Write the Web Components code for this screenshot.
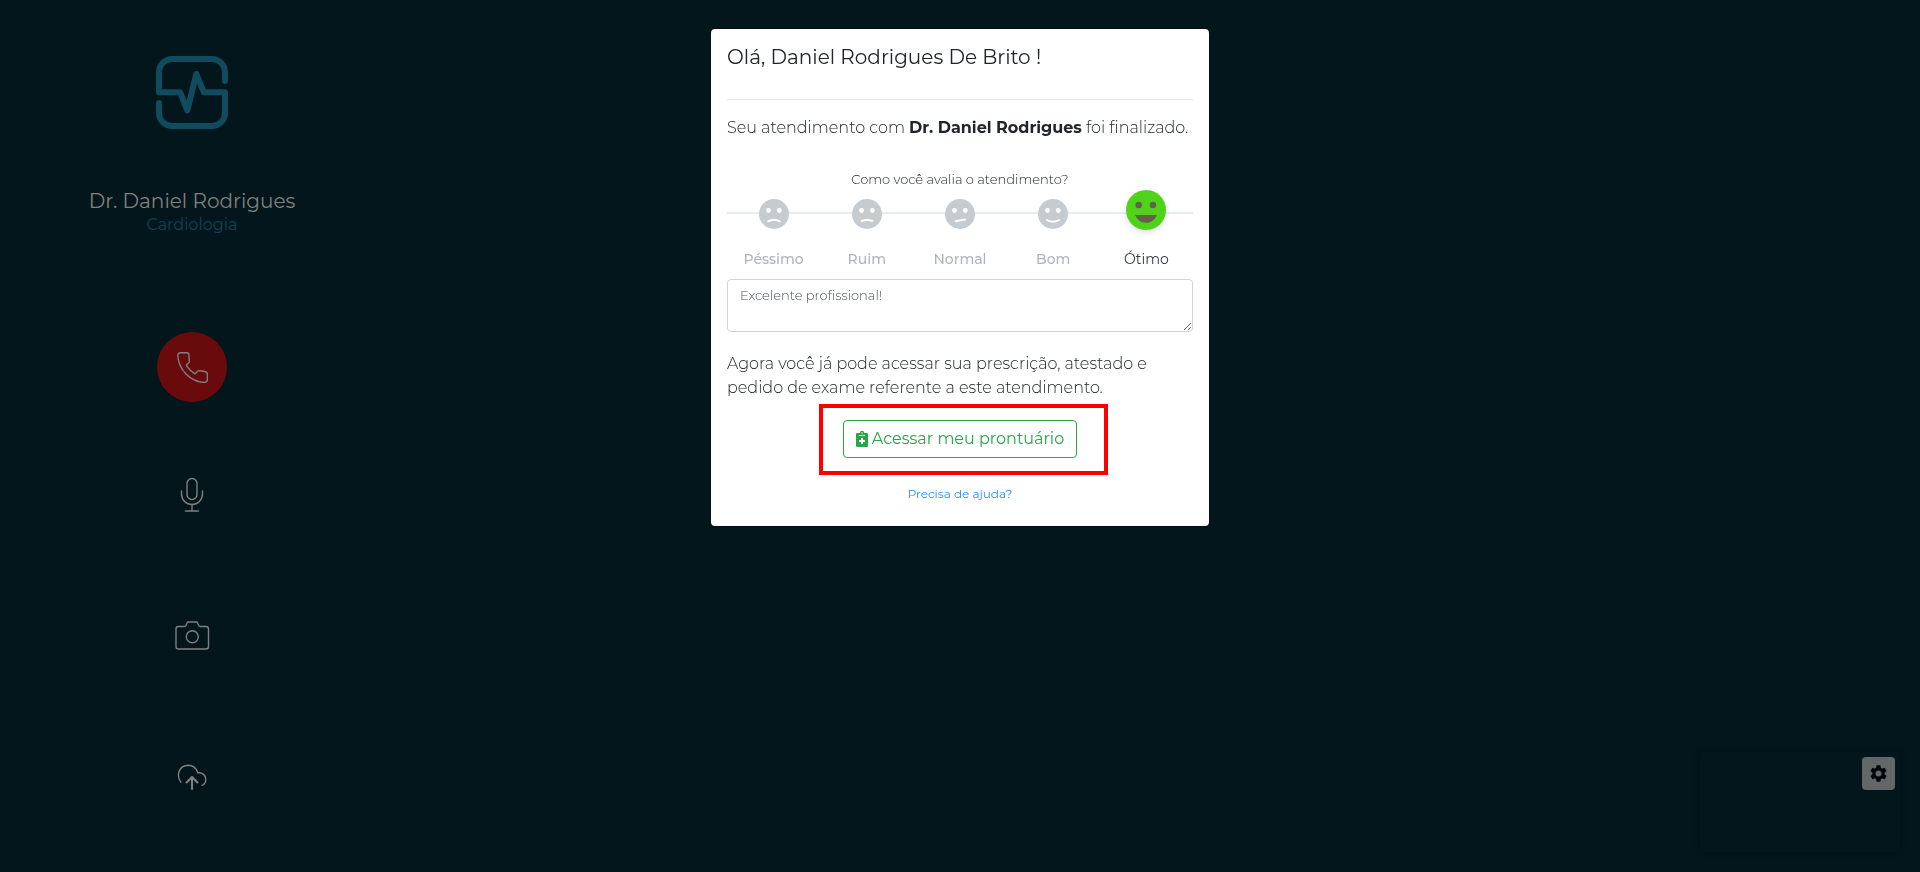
<!DOCTYPE html>
<html lang="pt-BR">
<head>
<meta charset="utf-8">
<meta name="viewport" content="width=device-width, initial-scale=1">
<title>Atendimento finalizado</title>
<style>
	body {
		min-height: 100vh;
		margin: 0;

		background: #02161c;
		color: #212529;

		font-family: Montserrat, Inter, sans-serif;
		font-size: 16px;
		font-weight: 300;
		line-height: 24px;
	}

	strong {
		font-weight: 700;
	}
</style>
</head>
<body>
<call-sidebar>
	<span slot="name">Dr. Daniel Rodrigues</span>
	<span slot="specialty">Cardiologia</span>
	<call-action label="Encerrar chamada" primary>
		<svg width="31" height="31" viewBox="0 0 31 31"><path d="M3.5.8H9.5Q12 .8 12 3V6Q12.8 9 12 10.5L9.8 12.5Q9.2 13.3 9.8 14.2Q13 19 18 21.8L20 20Q20.8 18.6 22 18.8L27 19.2Q30.4 20 30.4 22V27.5Q30 30.5 27 30.4Q17 30 9 22Q1.5 14 .8 4Q.6.8 3.5.8Z"/></svg>
	</call-action>
	<call-action label="Microfone">
		<svg width="24" height="36" viewBox="0 0 24 36"><rect x="7" y="1.5" width="10" height="21" rx="5"/><path d="M1.5 14V17A10.5 10.5 0 0 0 22.5 17V14M12 27.5V34M5.5 34H18.5"/></svg>
	</call-action>
	<call-action label="Câmera">
		<svg width="36" height="30" viewBox="0 0 36 30"><path d="M4.5 5.5H10.5Q11.5 5.5 12 4.5L13 2Q13.4 1 14.5 1H22Q23 1 23.5 2L24.8 4.5Q25.2 5.5 26.5 5.5H32Q34.5 5.5 34.5 8V25.5Q34.5 28 32 28H4.5Q2 28 2 25.5V8Q2 5.5 4.5 5.5Z"/><circle cx="18.3" cy="15.7" r="6"/></svg>
	</call-action>
	<call-action label="Enviar arquivo">
		<svg width="30" height="26" viewBox="0 0 30 26"><path d="M4 18.3C-1.5 11 2.5 1.5 11 1.3C15.8 1.3 19.4 4.2 20.8 8.8C25.5 8.2 28.8 11.4 28.8 15.2C28.8 18 27.4 20.4 25 21.3"/><path stroke-width="2" d="M15 25V13M9.6 18.5L15 13L20.4 18.5"/></svg>
	</call-action>
</call-sidebar>

<camera-preview></camera-preview>

<visit-dialog>
	<span slot="title">Olá, Daniel Rodrigues De Brito !</span>
	<span slot="summary">Seu atendimento com <strong>Dr. Daniel Rodrigues</strong> foi finalizado.</span>
	<rating-scale value="5">Como você avalia o atendimento?</rating-scale>
	<comment-box value="Excelente profissional!"></comment-box>
	<span slot="notice">Agora você já pode acessar sua prescrição, atestado e pedido de exame referente a este atendimento.</span>
	<record-button slot="action">Acessar meu prontuário</record-button>
	<span slot="help">Precisa de ajuda?</span>
</visit-dialog>

<script>
/** Left column: brand, doctor and the call controls. */
class CallSidebar extends HTMLElement {
	constructor() {
		super();

		this.attachShadow({ mode: "open" }).innerHTML = `
		<style>
		:host {
			display: flex;
			flex-direction: column;
			align-items: center;
			box-sizing: border-box;
			width: 20%;
			min-width: 240px;
			padding-top: 56px;

			text-align: center;
		}

		.logo {
			fill: none;
			stroke: #114b5e;
			stroke-width: 6;
			stroke-linecap: round;
			stroke-linejoin: round;
		}

		h1 {
			margin: 60px 0 0;

			color: #808080;
			font-size: 20px;
			font-weight: 400;
			line-height: 24px;
		}

		p {
			margin: 0;

			color: #0f4558;
			font-size: 16px;
			font-weight: 400;
			line-height: 24px;
		}

		nav {
			display: flex;
			flex-direction: column;
			gap: 71px;
			margin-top: 95px;
		}
		</style>
		<svg class="logo" width="72" height="73" viewBox="0 0 72 73" aria-hidden="true">
			<path d="M69 25V16A13 13 0 0 0 56 3H16A13 13 0 0 0 3 16V36.3H24.3L31.3 54.5L40.3 18L48 36.3H69V57A13 13 0 0 1 56 70H16A13 13 0 0 1 3 57V47"/>
		</svg>
		<h1><slot name="name"></slot></h1>
		<p><slot name="specialty"></slot></p>
		<nav><slot></slot></nav>`;
	}
}

/** Round icon button; the icon is slotted. */
class CallAction extends HTMLElement {
	constructor() {
		super();

		this.attachShadow({ mode: "open" }).innerHTML = `
		<style>
		:host {
			display: block;
		}

		:host([primary]) {
			margin-bottom: -13px;
		}

		button {
			display: flex;
			align-items: center;
			justify-content: center;
			width: 70px;
			height: 70px;
			padding: 0;

			background: none;
			border: 0;
			border-radius: 50%;

			cursor: pointer;
		}

		:host([primary]) button {
			background: #690b0c;
		}

		::slotted(svg) {
			fill: none;
			stroke: #808080;
			stroke-width: 1.4;
			stroke-linecap: round;
			stroke-linejoin: round;
		}
		</style>
		<button type="button"><slot></slot></button>`;
	}

	connectedCallback() {
		this.shadowRoot.querySelector("button").setAttribute("aria-label", this.getAttribute("label"));
	}
}

/** Own camera picture, floating in the corner. */
class CameraPreview extends HTMLElement {
	constructor() {
		super();

		this.attachShadow({ mode: "open" }).innerHTML = `
		<style>
		:host {
			position: fixed;
			right: 20px;
			bottom: 20px;
			display: flex;
			align-items: flex-start;
			justify-content: flex-end;
			box-sizing: border-box;
			width: 200px;
			height: 100px;
			padding: 5px;

			border-radius: 6px;
			box-shadow: 0 0 6px rgba(0, 0, 0, .2);
		}

		button {
			display: flex;
			align-items: center;
			justify-content: center;
			width: 33px;
			height: 33px;
			padding: 0;

			background: #636768;
			border: 0;
			border-radius: 4px;

			cursor: pointer;
		}
		</style>
		<button type="button" aria-label="Configurações">
			<svg width="17" height="17" viewBox="2 2 20 20" fill="#02080a"><path d="M19.14 12.94c.04-.3.06-.61.06-.94 0-.32-.02-.64-.07-.94l2.03-1.58c.18-.14.23-.41.12-.61l-1.92-3.32c-.12-.22-.37-.29-.59-.22l-2.39.96c-.5-.38-1.03-.7-1.62-.94l-.36-2.54c-.04-.24-.24-.41-.48-.41h-3.84c-.24 0-.43.17-.47.41l-.36 2.54c-.59.24-1.13.57-1.62.94l-2.39-.96c-.22-.08-.47 0-.59.22L2.74 8.87c-.12.21-.08.47.12.61l2.03 1.58c-.05.3-.09.63-.09.94s.02.64.07.94l-2.03 1.58c-.18.14-.23.41-.12.61l1.92 3.32c.12.22.37.29.59.22l2.39-.96c.5.38 1.03.7 1.62.94l.36 2.54c.05.24.24.41.48.41h3.84c.24 0 .44-.17.47-.41l.36-2.54c.59-.24 1.13-.56 1.62-.94l2.39.96c.22.08.47 0 .59-.22l1.92-3.32c.12-.22.07-.47-.12-.61l-2.01-1.58zM12 15.6c-1.98 0-3.6-1.62-3.6-3.6s1.62-3.6 3.6-3.6 3.6 1.62 3.6 3.6-1.62 3.6-3.6 3.6z"/></svg>
		</button>`;
	}
}

/** Modal shown when the visit is over. */
class VisitDialog extends HTMLElement {
	constructor() {
		super();

		this.attachShadow({ mode: "open" }).innerHTML = `
		<style>
		:host {
			position: fixed;
			inset: 0;
			display: flex;
			align-items: flex-start;
			justify-content: center;
			padding: 28px 8px;
			overflow: auto;
		}

		section {
			box-sizing: border-box;
			width: 100%;
			max-width: 500px;
			padding: 16px 16px 20px;

			background: #fff;
			background-clip: padding-box;
			border: 1px solid rgba(0, 0, 0, .2);
			border-radius: 5px;
		}

		h2 {
			margin: 0;
			padding-bottom: 30px;

			border-bottom: 1px solid #e5e5e5;

			font-size: 20px;
			font-weight: 400;
			line-height: 24px;
		}

		p {
			margin: 16px 0;
		}

		.notice {
			margin: 20px 0;
		}

		footer {
			display: flex;
			flex-direction: column;
			gap: 24px;
			align-items: center;
		}

		a {
			color: #2a8cf5;
			font-size: 12px;
			font-weight: 400;
			line-height: 24px;
			text-decoration: none;
		}
		</style>
		<section role="dialog" aria-labelledby="title">
			<h2 id="title"><slot name="title"></slot></h2>
			<p><slot name="summary"></slot></p>
			<slot></slot>
			<p class="notice"><slot name="notice"></slot></p>
			<footer>
				<slot name="action"></slot>
				<a href="#ajuda"><slot name="help"></slot></a>
			</footer>
		</section>`;
	}
}

const EYES = `<circle cx="9.5" cy="11.5" r="2.4"/><circle cx="20.3" cy="11.5" r="2.4"/>`;

const RATINGS = [
	{ label: "Péssimo", face: `${EYES}<path d="M9.2 22.3Q15 19 20.8 22.3"/>` },
	{ label: "Ruim", face: `${EYES}<path d="M9.8 21.8Q15 20 20.4 21.8"/>` },
	{ label: "Normal", face: `${EYES}<path d="M10.6 22.2L20 20.6"/>` },
	{ label: "Bom", face: `${EYES}<path d="M9 21Q15 24.4 21 21"/>` },
	{
		label: "Ótimo",
		face: `<circle cx="9.5" cy="11.3" r="2.4"/><circle cx="20.2" cy="11.3" r="2.4"/><path class="grin" d="M6.8 18.8H23.2Q20.8 24.6 15 24.6T6.8 18.8Z"/>`,
	},
];

/** Five faces on a line, one of them chosen. */
class RatingScale extends HTMLElement {
	constructor() {
		super();

		this.attachShadow({ mode: "open" });
	}

	connectedCallback() {
		const value = Number(this.getAttribute("value"));

		const options = RATINGS.map(({ label, face }, index) => `
		<label>
			<input type="radio" name="rating" value="${index + 1}" ${index + 1 === value ? "checked" : ""}>
			<svg viewBox="0 0 30 30" aria-hidden="true">${face}</svg>
			<span>${label}</span>
		</label>`).join("");

		this.shadowRoot.innerHTML = `
		<style>
		:host {
			display: block;
			margin-top: 28px;
		}

		fieldset {
			min-width: 0;
			margin: 0;
			padding: 0;

			border: 0;
		}

		legend {
			width: 100%;
			padding: 0;

			font-size: 13px;
			line-height: 22px;
			text-align: center;
		}

		.options {
			display: grid;
			grid-template-columns: repeat(5, 1fr);

			background: linear-gradient(#e9ecef, #e9ecef) 0 22px / 100% 2px no-repeat;
		}

		label {
			display: grid;
			grid-template-rows: 50px 39px;
			justify-items: center;

			color: #adb5bd;
			font-size: 14px;
			font-weight: 500;
			line-height: 38px;

			cursor: pointer;
		}

		input {
			position: absolute;
			opacity: 0;
		}

		svg {
			width: 30px;
			height: 30px;
			margin-top: 9px;

			background: #c6cbcf;
			border-radius: 50%;
			fill: #fff;
		}

		path {
			fill: none;
			stroke: #fff;
			stroke-width: 2;
			stroke-linecap: round;
		}

		input:checked + svg {
			width: 40px;
			height: 40px;
			margin-top: 0;

			background: #4fd318;
			box-shadow: 0 3px 6px rgba(0, 0, 0, .1);
			fill: #665f50;
		}

		.grin {
			fill: #fff;
			stroke: none;
		}

		input:checked + svg .grin {
			fill: #665f50;
		}

		input:checked ~ span {
			color: #343a40;
			font-weight: 400;
		}
		</style>
		<fieldset>
			<legend><slot></slot></legend>
			<div class="options">${options}</div>
		</fieldset>`;
	}
}

/** Free text next to the rating. */
class CommentBox extends HTMLElement {
	constructor() {
		super();

		this.attachShadow({ mode: "open" }).innerHTML = `
		<style>
		:host {
			display: block;
		}

		textarea {
			display: block;
			box-sizing: border-box;
			width: 100%;
			height: 53px;
			padding: 6px 12px;

			background: #fff;
			border: 1px solid #ced4da;
			border-radius: 4px;
			color: #495057;

			font: inherit;
			font-size: 13px;
			line-height: 18px;
			resize: vertical;
		}
		</style>
		<textarea aria-label="Comentário"></textarea>`;
	}

	connectedCallback() {
		this.shadowRoot.querySelector("textarea").value = this.getAttribute("value") ?? "";
	}
}

/** Outlined button with a highlight frame around it. */
class RecordButton extends HTMLElement {
	constructor() {
		super();

		this.attachShadow({ mode: "open" }).innerHTML = `
		<style>
		:host {
			position: relative;
			display: block;
		}

		.frame {
			position: absolute;
			inset: -16px -31px -17px -24px;

			border: 4px solid #f00;

			pointer-events: none;
		}

		button {
			display: flex;
			gap: 4px;
			align-items: center;
			padding: 6px 12px;

			background: #fff;
			border: 1px solid #28a745;
			border-radius: 4px;
			color: #28a745;

			font: inherit;
			font-size: 16px;
			font-weight: 400;
			line-height: 24px;

			cursor: pointer;
		}
		</style>
		<button type="button">
			<svg width="12" height="16" viewBox="0 0 12 16" aria-hidden="true">
				<path fill="#28a745" fill-rule="evenodd" d="M1.3 2H3.8A2.2 2.2 0 0 1 8.2 2H10.7Q12 2 12 3.3V14.7Q12 16 10.7 16H1.3Q0 16 0 14.7V3.3Q0 2 1.3 2ZM6 1.3A.7.7 0 1 0 6 2.8A.7.7 0 1 0 6 1.3ZM3 4V4.8H9V4ZM5 7V9H3V11H5V13H7V11H9V9H7V7Z"/>
			</svg>
			<slot></slot>
		</button>
		<div class="frame"></div>`;
	}
}

customElements.define("call-sidebar", CallSidebar);
customElements.define("call-action", CallAction);
customElements.define("camera-preview", CameraPreview);
customElements.define("visit-dialog", VisitDialog);
customElements.define("rating-scale", RatingScale);
customElements.define("comment-box", CommentBox);
customElements.define("record-button", RecordButton);
</script>
</body>
</html>
